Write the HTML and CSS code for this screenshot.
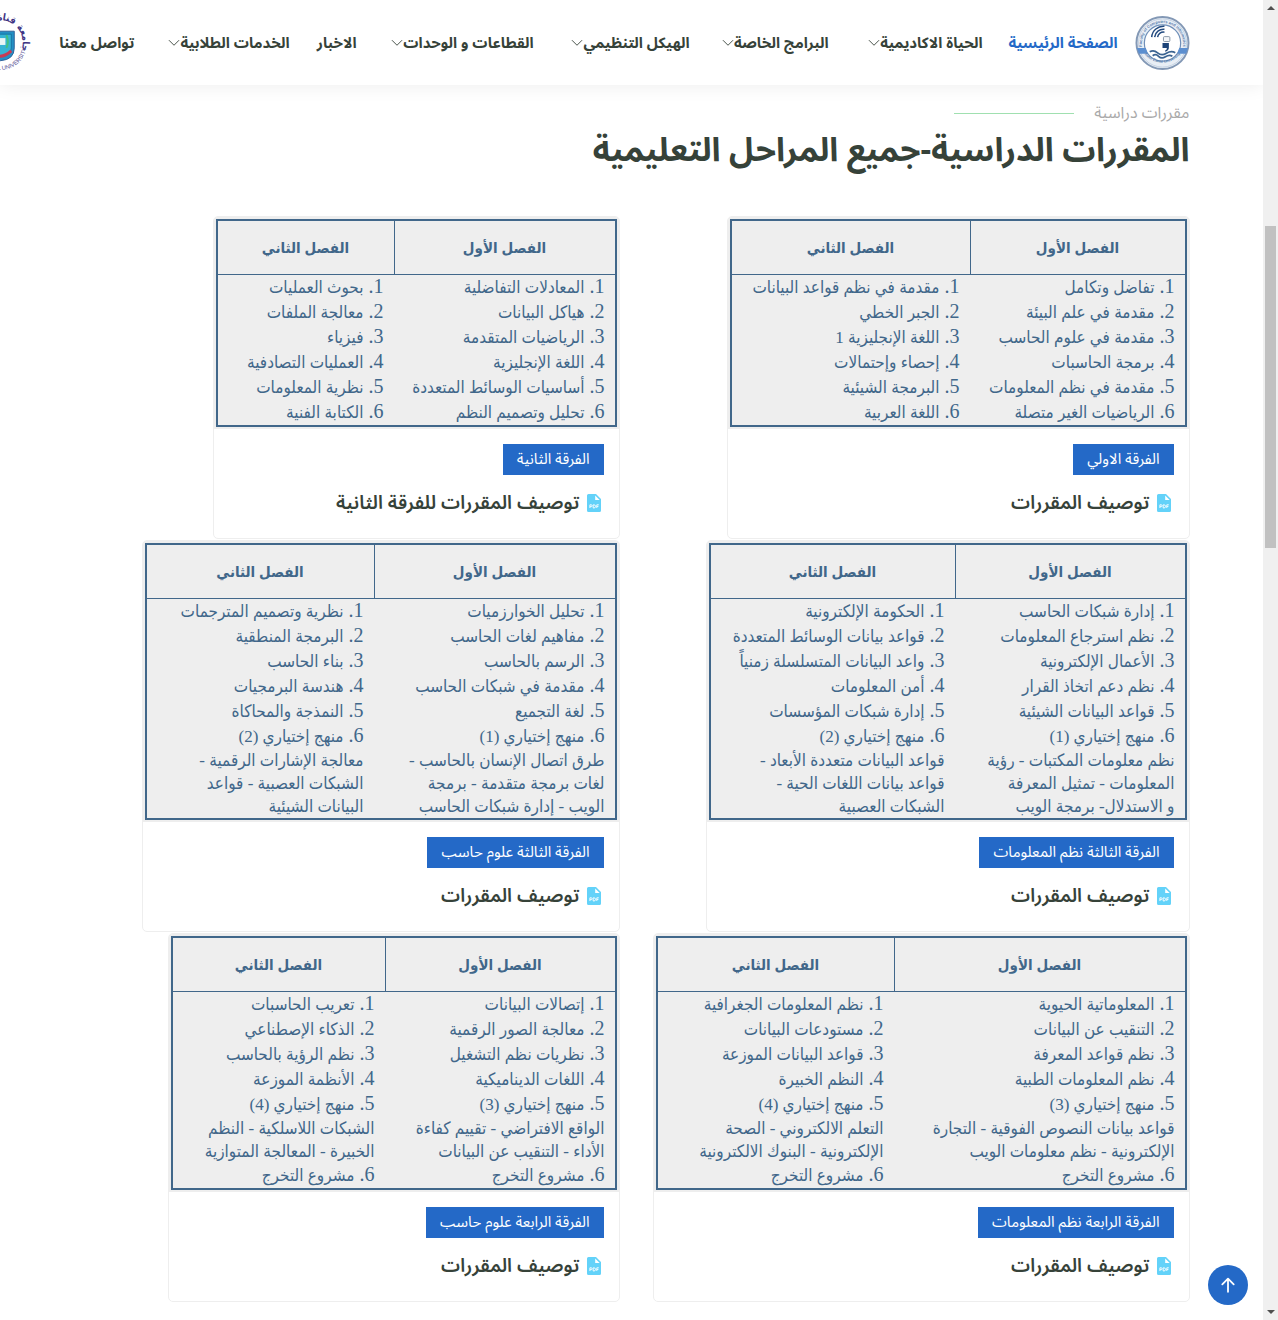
FILE: index.html
```html
<!DOCTYPE html>
<html lang="ar" dir="rtl">
<head>
<meta charset="utf-8">
<meta name="viewport" content="width=device-width, initial-scale=1">
<title>المقررات الدراسية</title>
<link rel="stylesheet" href="styles.css">
</head>
<body>
<svg class="sprite" aria-hidden="true">
  <symbol id="chevron" viewBox="0 0 16 16"><path d="M1.600 4.600 8 11l6.400-6.400" fill="none" stroke="currentColor" stroke-width="1.200" stroke-linecap="round" stroke-linejoin="round"/></symbol>
  <symbol id="pdf" viewBox="0 0 14 18"><path d="M1.500 0H9l5 5v11.500a1.500 1.500 0 0 1-1.500 1.500h-11A1.500 1.500 0 0 1 0 16.500v-15A1.500 1.500 0 0 1 1.500 0z" fill="#63d2f9"/><path d="M8.200 1.500v4.500h4.500z" fill="#fff"/><path d="M2.900 14v-3.200h1.300a.9.900 0 0 1 0 1.900H2.900M6.200 10.800v3.200h.7a1.600 1.600 0 0 0 0-3.200zM9.800 14v-3.200h2M9.800 12.400h1.600" fill="none" stroke="#fff" stroke-width=".9"/></symbol>
</svg>

<header class="header">
  <nav class="nav container">
    <a class="brand" href="#" aria-label="كلية الحاسبات">
      <svg class="logo" viewBox="0 0 56 56" direction="ltr">
        <defs>
          <path id="arcTop" d="M7.500 33A21 21 0 1 1 48.500 33"/>
          <path id="arcBottom" d="M9 38A23 23 0 0 0 47 38"/>
        </defs>
        <circle cx="28" cy="28" r="26.500" fill="#e8eef5" stroke="#8398b5" stroke-width="2"/>
        <circle cx="28" cy="28" r="24.500" fill="none" stroke="#c5d2e2" stroke-width="1"/>
        <circle cx="28" cy="28" r="18.500" fill="#fff" stroke="#6f8fb8" stroke-width="1.200"/>
        <path d="M2 33h9l2 6H4zM54 33h-9l-2 6h9z" fill="#5c8fd0"/>
        <text class="ring"><textPath href="#arcTop" startOffset="50%" text-anchor="middle">Faculty of Computers and Informatics</textPath></text>
        <text class="ring"><textPath href="#arcBottom" startOffset="50%" text-anchor="middle">Suez Canal University</textPath></text>
        <path d="M17 22a12 12 0 0 1 13-11M20 22a9 9 0 0 1 10-8M23 22a6 6 0 0 1 7-5" fill="none" stroke="#234b80" stroke-width="1.500"/>
        <rect x="29" y="21.500" width="6.500" height="5" rx="1" fill="#f4f6f9" stroke="#7d8c9e" stroke-width=".9"/>
        <path d="M28 28h6.500v4.500q0 3-3.500 4.500l-.5-1q2-1 2-3H28z" fill="#1d4478"/>
        <path d="M15 37q4-2.500 8 1t9 .5 9-.5M18 41q3-2.500 6 .5t7 .5 7-.5" fill="none" stroke="#3b6492" stroke-width="1.800"/>
      </svg>
    </a>
    <ul class="menu">
      <li><a class="active" href="#">الصفحة الرئيسية</a></li>
      <li><a href="#">الحياة الاكاديمية<svg class="chev"><use href="#chevron"/></svg></a></li>
      <li><a href="#">البرامج الخاصة<svg class="chev"><use href="#chevron"/></svg></a></li>
      <li><a href="#">الهيكل التنظيمي<svg class="chev"><use href="#chevron"/></svg></a></li>
      <li><a href="#">القطاعات و الوحدات<svg class="chev"><use href="#chevron"/></svg></a></li>
      <li><a href="#">الاخبار</a></li>
      <li><a href="#">الخدمات الطلابية<svg class="chev"><use href="#chevron"/></svg></a></li>
      <li><a href="#">تواصل معنا</a></li>
    </ul>
    <a class="brand" href="#" aria-label="جامعة قناة السويس">
      <svg class="logo" viewBox="0 0 56 56" direction="ltr">
        <defs>
          <path id="sealTop" d="M6.500 34A22.500 22.500 0 1 1 49.500 34"/>
          <path id="sealBottom" d="M1.500 29A26.500 26.500 0 0 0 54.500 29"/>
        </defs>
        <text class="seal-ar"><textPath href="#sealTop" startOffset="50%" text-anchor="middle">جامعة قناة السويس</textPath></text>
        <text class="seal-en"><textPath href="#sealBottom" startOffset="50%" text-anchor="middle">SUEZ CANAL UNIVERSITY</textPath></text>
        <path d="M14 16h28v17q0 12-14 13-14-1-14-13z" fill="#238fc4" stroke="#30629a" stroke-width="1"/>
        <path d="M17 19h22v14q0 8-11 9-11-1-11-9z" fill="#36b3d4" stroke="#15699a" stroke-width=".8"/>
        <path d="M21 23h12v7H21z" fill="#e9f5f5"/>
        <path d="M34 20q3 7 0 13" fill="none" stroke="#43bf80" stroke-width="2"/>
        <path d="M17 38q11 8 22-2" fill="none" stroke="#c83b54" stroke-width="3"/>
      </svg>
    </a>
  </nav>
</header>

<main class="container">
  <div class="section-title">
    <p class="eyebrow">مقررات دراسية</p>
    <h2>المقررات الدراسية-جميع المراحل التعليمية</h2>
  </div>

  <div class="courses">
    <article class="card w1">
      <div class="thumb"><table>
        <thead><tr><th class="c1">الفصل الأول</th><th>الفصل الثاني</th></tr></thead>
        <tbody><tr>
          <td><ol><li>تفاضل وتكامل</li><li>مقدمة في علم البيئة</li><li>مقدمة في علوم الحاسب</li><li>برمجة الحاسبات</li><li>مقدمة في نظم المعلومات</li><li>الرياضيات الغير متصلة</li></ol></td>
          <td><ol><li>مقدمة في نظم قواعد البيانات</li><li>الجبر الخطي</li><li>اللغة الإنجليزية 1</li><li>إحصاء وإحتمالات</li><li>البرمجة الشيئية</li><li>اللغة العربية</li></ol></td>
        </tr></tbody>
      </table></div>
      <div class="body"><a class="tag" href="#">الفرقة الاولي</a><h3><a href="#"><svg class="pdf"><use href="#pdf"/></svg>توصيف المقررات</a></h3></div>
    </article>

    <article class="card w2">
      <div class="thumb"><table>
        <thead><tr><th class="c1">الفصل الأول</th><th>الفصل الثاني</th></tr></thead>
        <tbody><tr>
          <td><ol><li>المعادلات التفاضلية</li><li>هياكل البيانات</li><li>الرياضيات المتقدمة</li><li>اللغة الإنجليزية</li><li>أساسيات الوسائط المتعددة</li><li>تحليل وتصميم النظم</li></ol></td>
          <td><ol><li>بحوث العمليات</li><li>معالجة الملفات</li><li>فيزياء</li><li>العمليات التصادفية</li><li>نظرية المعلومات</li><li>الكتابة الفنية</li></ol></td>
        </tr></tbody>
      </table></div>
      <div class="body"><a class="tag" href="#">الفرقة الثانية</a><h3><a href="#"><svg class="pdf"><use href="#pdf"/></svg>توصيف المقررات للفرقة الثانية</a></h3></div>
    </article>

    <article class="card w3">
      <div class="thumb"><table>
        <thead><tr><th class="c1">الفصل الأول</th><th>الفصل الثاني</th></tr></thead>
        <tbody><tr>
          <td><ol><li>إدارة شبكات الحاسب</li><li>نظم استرجاع المعلومات</li><li>الأعمال الإلكترونية</li><li>نظم دعم اتخاذ القرار</li><li>قواعد البيانات الشيئية</li><li>منهج إختياري (1)<p>نظم معلومات المكتبات - رؤية<br>المعلومات - تمثيل المعرفة<br>و الاستدلال- برمجة الويب</p></li></ol></td>
          <td><ol><li>الحكومة الإلكترونية</li><li>قواعد بيانات الوسائط المتعددة</li><li>واعد البيانات المتسلسلة زمنياً</li><li>أمن المعلومات</li><li>إدارة شبكات المؤسسات</li><li>منهج إختياري (2)<p>قواعد البيانات متعددة الأبعاد -<br>قواعد بيانات اللغات الحية -<br>الشبكات العصبية</p></li></ol></td>
        </tr></tbody>
      </table></div>
      <div class="body"><a class="tag" href="#">الفرقة الثالثة نظم المعلومات</a><h3><a href="#"><svg class="pdf"><use href="#pdf"/></svg>توصيف المقررات</a></h3></div>
    </article>

    <article class="card w4">
      <div class="thumb"><table>
        <thead><tr><th class="c1">الفصل الأول</th><th>الفصل الثاني</th></tr></thead>
        <tbody><tr>
          <td><ol><li>تحليل الخوارزميات</li><li>مفاهيم لغات الحاسب</li><li>الرسم بالحاسب</li><li>مقدمة في شبكات الحاسب</li><li>لغة التجميع</li><li>منهج إختياري (1)<p>طرق اتصال الإنسان بالحاسب -<br>لغات برمجة متقدمة - برمجة<br>الويب - إدارة شبكات الحاسب</p></li></ol></td>
          <td><ol><li>نظرية وتصميم المترجمات</li><li>البرمجة المنطقية</li><li>بناء الحاسب</li><li>هندسة البرمجيات</li><li>النمذجة والمحاكاة</li><li>منهج إختياري (2)<p>معالجة الإشارات الرقمية -<br>الشبكات العصبية - قواعد<br>البيانات الشيئية</p></li></ol></td>
        </tr></tbody>
      </table></div>
      <div class="body"><a class="tag" href="#">الفرقة الثالثة علوم حاسب</a><h3><a href="#"><svg class="pdf"><use href="#pdf"/></svg>توصيف المقررات</a></h3></div>
    </article>

    <article class="card w5">
      <div class="thumb"><table>
        <thead><tr><th class="c1">الفصل الأول</th><th>الفصل الثاني</th></tr></thead>
        <tbody><tr>
          <td><ol><li>المعلوماتية الحيوية</li><li>التنقيب عن البيانات</li><li>نظم قواعد المعرفة</li><li>نظم المعلومات الطبية</li><li>منهج إختياري (3)<p>قواعد بيانات النصوص الفوقية - التجارة<br>الإلكترونية - نظم معلومات الويب</p></li><li>مشروع التخرج</li></ol></td>
          <td><ol><li>نظم المعلومات الجغرافية</li><li>مستودعات البيانات</li><li>قواعد البيانات الموزعة</li><li>النظم الخبيرة</li><li>منهج إختياري (4)<p>التعلم الالكتروني - الصحة<br>الإلكترونية - البنوك الالكترونية</p></li><li>مشروع التخرج</li></ol></td>
        </tr></tbody>
      </table></div>
      <div class="body"><a class="tag" href="#">الفرقة الرابعة نظم المعلومات</a><h3><a href="#"><svg class="pdf"><use href="#pdf"/></svg>توصيف المقررات</a></h3></div>
    </article>

    <article class="card w6">
      <div class="thumb"><table>
        <thead><tr><th class="c1">الفصل الأول</th><th>الفصل الثاني</th></tr></thead>
        <tbody><tr>
          <td><ol><li>إتصالات البيانات</li><li>معالجة الصور الرقمية</li><li>نظريات نظم التشغيل</li><li>اللغات الديناميكية</li><li>منهج إختياري (3)<p>الواقع الافتراضي - تقييم كفاءة<br>الأداء - التنقيب عن البيانات</p></li><li>مشروع التخرج</li></ol></td>
          <td><ol><li>تعريب الحاسبات</li><li>الذكاء الإصطناعي</li><li>نظم الرؤية بالحاسب</li><li>الأنظمة الموزعة</li><li>منهج إختياري (4)<p>الشبكات اللاسلكية - النظم<br>الخبيرة - المعالجة المتوازية</p></li><li>مشروع التخرج</li></ol></td>
        </tr></tbody>
      </table></div>
      <div class="body"><a class="tag" href="#">الفرقة الرابعة علوم حاسب</a><h3><a href="#"><svg class="pdf"><use href="#pdf"/></svg>توصيف المقررات</a></h3></div>
    </article>
  </div>
</main>

<a class="to-top" href="#" aria-label="إلى الأعلى"><svg viewBox="0 0 16 16" width="24" height="24"><path d="M8 12.500V4M4.200 7.600 8 3.800l3.800 3.800" fill="none" stroke="#fff" stroke-width="1.200" stroke-linecap="round" stroke-linejoin="round"/></svg></a>

<div class="scrollbar" aria-hidden="true"><span class="arrow up"></span><span class="thumb-bar"></span><span class="arrow down"></span></div>
</body>
</html>
```
FILE: styles.css
```css
:root {
  --blue: #2469c7;
  --dark: #364239;
  --ink: #41678a;
  --ui: "Noto Sans Arabic", "Noto Sans", sans-serif;
  --bar: 15px;
}
* { box-sizing: border-box; }
body {
  margin: 0;
  padding-right: var(--bar);
  background: #fff;
  color: var(--dark);
  font-family: var(--ui);
  overflow-x: clip;
}
a { color: inherit; text-decoration: none; }
ul, ol, p, h2, h3 { margin: 0; padding: 0; }
.sprite { position: absolute; width: 0; height: 0; }
.container { max-width: 1140px; margin: 0 auto; padding: 0 12px; }

/* Header */
.header { height: 85px; background: #fff; box-shadow: 0 0 18px rgba(0, 0, 0, .08); }
.nav { display: flex; align-items: center; height: 100%; }
.brand { flex: none; display: block; height: 56px; }
.logo { width: 55px; height: 56px; overflow: visible; direction: ltr; }
.ring { font: bold 4px "Liberation Sans", sans-serif; fill: #587dac; }
.seal-ar { font: bold 10px "DejaVu Sans Condensed", sans-serif; fill: #3f3584; }
.seal-en { font: 6px "Liberation Sans", sans-serif; fill: #5d5597; }
.menu {
  flex: none;
  display: grid;
  grid-template-columns: 135px 154px 139px 156px 177px 67px 155px 107px;
  margin-right: 17px;
  list-style: none;
  font-size: 15px;
  font-weight: 700;
  line-height: 32px;
  white-space: nowrap;
}
.menu a { display: flex; align-items: center; }
.menu .active { color: var(--blue); }
.chev { width: 12px; height: 12px; }

/* Section heading */
.section-title { padding: 14px 0 41px; }
.eyebrow {
  display: flex;
  align-items: center;
  gap: 20px;
  color: #aaa;
  font-size: 16px;
  line-height: 28px;
}
.eyebrow::after { content: ""; width: 120px; height: 1px; background: #a0e0b0; }
h2 { font-size: 33px; font-weight: 700; line-height: 48px; }

/* Course cards */
.courses { display: grid; grid-template-columns: 1fr 1fr; column-gap: 24px; row-gap: 1px; }
.card { max-width: 100%; border: 1px solid #eee; border-radius: 5px; overflow: hidden; }
.w1 { width: 463px; --first: 215px; }
.w2 { width: 407px; --first: 221px; }
.w3 { width: 484px; --first: 230px; }
.w4 { width: 478px; --first: 241px; }
.w5 { width: 537px; --first: 291px; }
.w6 { width: 452px; --first: 230px; }
.thumb { padding: 2px; background: #eee; }
table {
  width: 100%;
  table-layout: fixed;
  border: 2px solid var(--ink);
  border-spacing: 0;
  color: var(--ink);
  font-family: "Liberation Serif", "DejaVu Sans Condensed", "DejaVu Sans", serif;
  font-size: 17px;
}
th { height: 54px; padding: 0; border-bottom: 1px solid var(--ink); font-size: 15px; }
.c1 { width: var(--first); border-left: 1px solid var(--ink); }
td { padding: 0 10px; vertical-align: top; white-space: nowrap; }
td ol { list-style: none; counter-reset: course; }
td li { height: 25px; line-height: 25px; counter-increment: course; }
td li:has(p) { height: auto; }
td li::before { content: counter(course) ". "; font-size: 20px; line-height: 20px; }
td p { line-height: 23px; }
.body { padding: 15px 15px 17px; }
.tag {
  display: block;
  width: fit-content;
  padding: 0 14px;
  background: var(--blue);
  color: #fff;
  font-size: 15px;
  line-height: 31px;
}
h3 { margin-top: 10px; font-size: 19px; font-weight: 600; line-height: 36px; }
h3 a { display: flex; align-items: center; gap: 7px; padding-right: 3px; }
.pdf { width: 14px; height: 18px; }

/* Back to top */
.to-top {
  position: fixed;
  right: 30px;
  bottom: 15px;
  display: grid;
  place-items: center;
  width: 40px;
  height: 40px;
  border-radius: 50%;
  background: var(--blue);
}

/* Scroll track */
.scrollbar { position: fixed; top: 0; right: 0; bottom: 0; width: var(--bar); background: #f0f0f0; }
.thumb-bar { position: absolute; top: 226px; left: 2px; right: 2px; height: 322px; background: #c1c1c1; }
.arrow { position: absolute; left: 4px; border: 4px solid transparent; }
.up { top: 2px; border-bottom-color: #505050; }
.down { bottom: 2px; border-top-color: #505050; }
```
